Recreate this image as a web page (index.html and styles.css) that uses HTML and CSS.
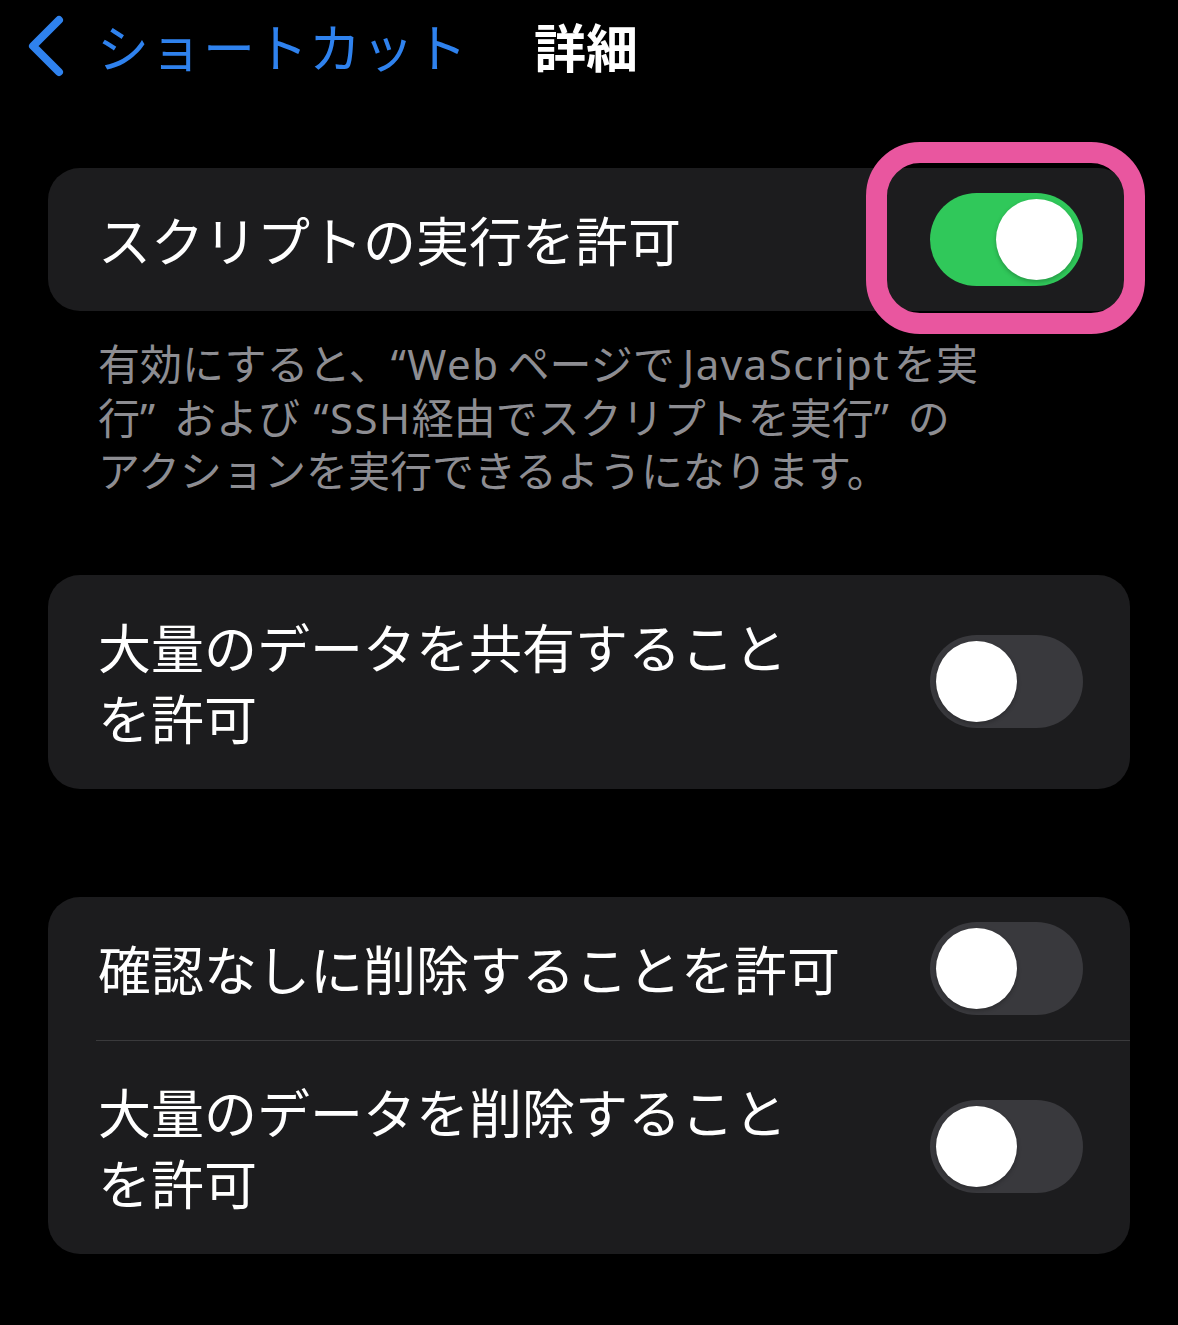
FILE: index.html
```html
<!DOCTYPE html>
<html lang="ja">
<head>
<meta charset="utf-8">
<title>詳細</title>
<link rel="stylesheet" href="styles.css">
</head>
<body>
<header class="nav">
  <a class="back" href="#">
    <svg class="chevron" width="44" height="64" viewBox="0 0 44 64" aria-hidden="true">
      <path d="M34 6 L8 32 L34 58" fill="none" stroke="#2f82ee" stroke-width="8" stroke-linecap="round" stroke-linejoin="round"/>
    </svg>
    <span class="back-label">ショートカット</span>
  </a>
  <h1 class="title">詳細</h1>
</header>

<main class="content">
  <section class="group">
    <div class="card">
      <div class="row">
        <span class="label">スクリプトの実行を許可</span>
        <span class="toggle on"><span class="knob"></span></span>
        <span class="highlight"></span>
      </div>
    </div>
    <p class="footer"><span class="line">有効にすると、<span class="latin">“Web</span><span class="gap"></span>ページで<span class="gap"></span><span class="latin">JavaScript</span><span class="gap-s"></span>を実</span><span class="line">行<span class="latin">”</span><span class="gap"></span> および <span class="gap-s"></span><span class="latin">“SSH</span>経由でスクリプトを実行<span class="latin">”</span><span class="gap"></span> の</span><span class="line">アクションを実行できるようになります。</span></p>
  </section>

  <section class="group second">
    <div class="card">
      <div class="row">
        <span class="label">大量のデータを共有すること<br>を許可</span>
        <span class="toggle"><span class="knob"></span></span>
      </div>
    </div>
  </section>

  <section class="group third">
    <div class="card">
      <div class="row">
        <span class="label">確認なしに削除することを許可</span>
        <span class="toggle"><span class="knob"></span></span>
      </div>
      <div class="row divided">
        <span class="label">大量のデータを削除すること<br>を許可</span>
        <span class="toggle"><span class="knob"></span></span>
      </div>
    </div>
  </section>
</main>
</body>
</html>
```

FILE: styles.css
```css
* { box-sizing: border-box; }

html, body {
  margin: 0;
  padding: 0;
  background: #000;
}

body {
  width: 1178px;
  min-height: 1325px;
  font-family: "Noto Sans", "Noto Sans CJK JP", sans-serif;
  color: #fff;
}

.nav {
  height: 92px;
  display: flex;
  align-items: center;
  padding-left: 25px;
}

.back {
  display: flex;
  align-items: center;
  text-decoration: none;
  color: #2f82ee;
}

.chevron {
  display: block;
}

.back-label {
  margin-left: 28px;
  font-size: 52px;
  line-height: 60px;
  letter-spacing: 1px;
  font-family: "Noto Sans CJK JP", sans-serif;
}

.title {
  margin: 0 0 0 66px;
  font-size: 52px;
  line-height: 60px;
  font-weight: 700;
  font-family: "Noto Sans CJK JP", sans-serif;
}

.content {
  padding: 0 48px;
}

.group {
  margin-top: 76px;
}

.group.second {
  margin-top: 79px;
}

.group.third {
  margin-top: 108px;
}

.card {
  background: #1c1c1e;
  border-radius: 32px;
}

.row {
  position: relative;
  display: flex;
  align-items: center;
  justify-content: space-between;
  padding: 0 47px 0 50px;
}

.row.divided::before {
  content: "";
  position: absolute;
  top: 0;
  left: 48px;
  right: 0;
  height: 1px;
  background: #3a3a3c;
}

.label {
  font-family: "Noto Sans CJK JP", sans-serif;
  font-size: 53px;
  line-height: 71px;
  padding: 36px 0;
  color: #fff;
}

.toggle {
  position: relative;
  flex: none;
  width: 153px;
  height: 93px;
  border-radius: 47px;
  background: #39393d;
  display: flex;
  align-items: center;
  padding: 0 6px;
  z-index: 1;
}

.toggle.on {
  background: #30c85a;
  justify-content: flex-end;
}

.knob {
  width: 81px;
  height: 81px;
  border-radius: 50%;
  background: #fff;
  box-shadow: 0 2px 4px rgba(0, 0, 0, 0.25);
}

.highlight {
  position: absolute;
  top: -26px;
  right: -15px;
  width: 279px;
  height: 192px;
  border: 21px solid #e9569f;
  border-radius: 54px;
  pointer-events: none;
}

.footer {
  margin: 0;
  padding: 24px 0 0 50px;
  display: flex;
  flex-direction: column;
  font-family: "Noto Sans CJK JP", sans-serif;
  font-size: 42px;
  color: #8d8d92;
  white-space: nowrap;
}

.line {
  display: block;
  height: 53.5px;
  line-height: 53.5px;
}

.latin {
  font-family: "Noto Sans", sans-serif;
  letter-spacing: 1.5px;
}

.gap {
  display: inline-block;
  width: 8px;
}

.gap-s {
  display: inline-block;
  width: 4px;
}
```
